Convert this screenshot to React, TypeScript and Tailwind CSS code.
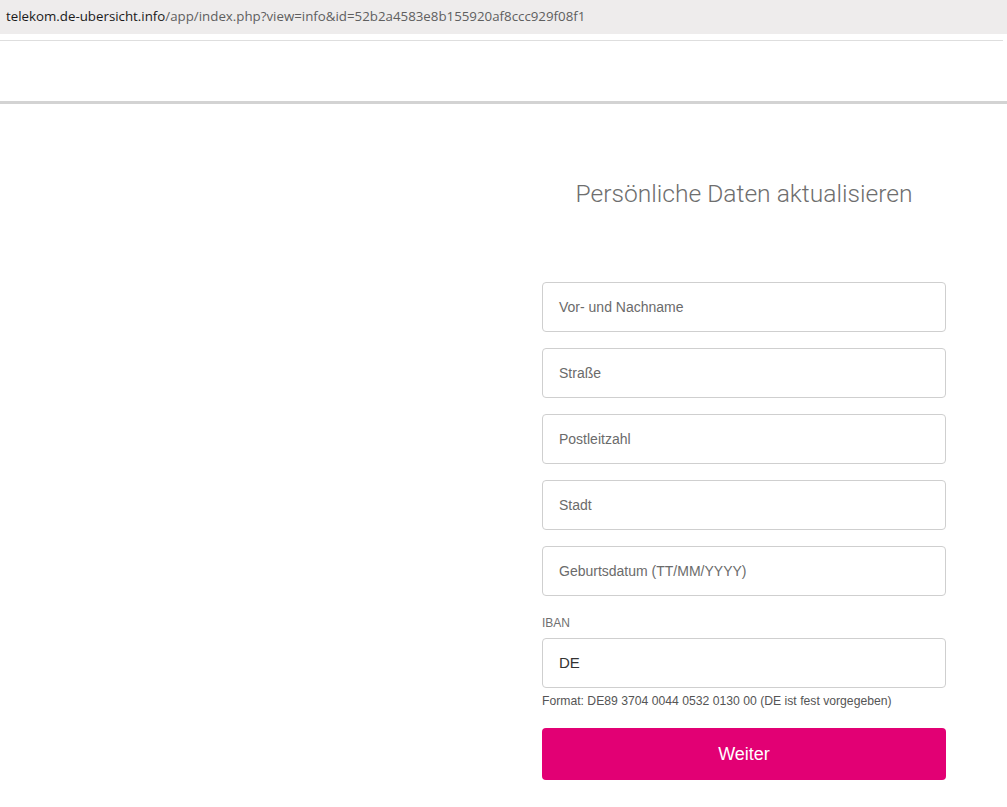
import React from "react";

const fields = [
  "Vor- und Nachname",
  "Straße",
  "Postleitzahl",
  "Stadt",
  "Geburtsdatum (TT/MM/YYYY)",
];

export default function App() {
  return (
    <div className="w-[1007px] h-[807px] bg-white overflow-hidden" style={{ fontFamily: "'Liberation Sans', Arial, sans-serif" }}>
      <div className="h-[34px] bg-[#eeecec] flex items-center pl-[6px] text-[13.3px]" style={{ fontFamily: "'Open Sans', 'Liberation Sans', sans-serif" }}>
        <span className="text-[#1a1a1a]">telekom.de-ubersicht.info</span>
        <span className="text-[#5f5f5f]">/app/index.php?view=info&amp;id=52b2a4583e8b155920af8ccc929f08f1</span>
      </div>
      <div className="h-[6px]" />
      <div className="h-[1px] bg-[#dedede] mr-[4px]" />
      <div className="h-[60px]" />
      <div className="h-[3px] bg-[#d3d3d3]" />
      <div className="flex">
        <div className="w-[542px] shrink-0" />
        <div className="w-[404px] shrink-0 flex flex-col">
          <h1 className="mt-[73px] h-[34px] text-center text-[24.6px] leading-[34px] font-light text-[#6e6e6e]" style={{ fontFamily: "Roboto, 'Liberation Sans', sans-serif" }}>
            Persönliche Daten aktualisieren
          </h1>
          <div className="mt-[71px] flex flex-col gap-[16px]">
            {fields.map((f) => (
              <div key={f} className="h-[50px] border border-[#cfcfcf] rounded-[4px] flex items-center pl-[16px] text-[14px] text-[#6b6b6b]">
                {f}
              </div>
            ))}
          </div>
          <div className="mt-[20px] text-[12px] leading-[14px] text-[#707070]">IBAN</div>
          <div className="mt-[8px] h-[50px] border border-[#cfcfcf] rounded-[4px] flex items-center pl-[16px] text-[15px] text-[#333]">
            DE
          </div>
          <div className="mt-[6px] text-[12.2px] leading-[14px] text-[#555]">
            Format: DE89 3704 0044 0532 0130 00 (DE ist fest vorgegeben)
          </div>
          <div className="mt-[20px] h-[52px] bg-[#e20074] rounded-[4px] flex items-center justify-center text-white text-[18px]">
            Weiter
          </div>
        </div>
      </div>
    </div>
  );
}
